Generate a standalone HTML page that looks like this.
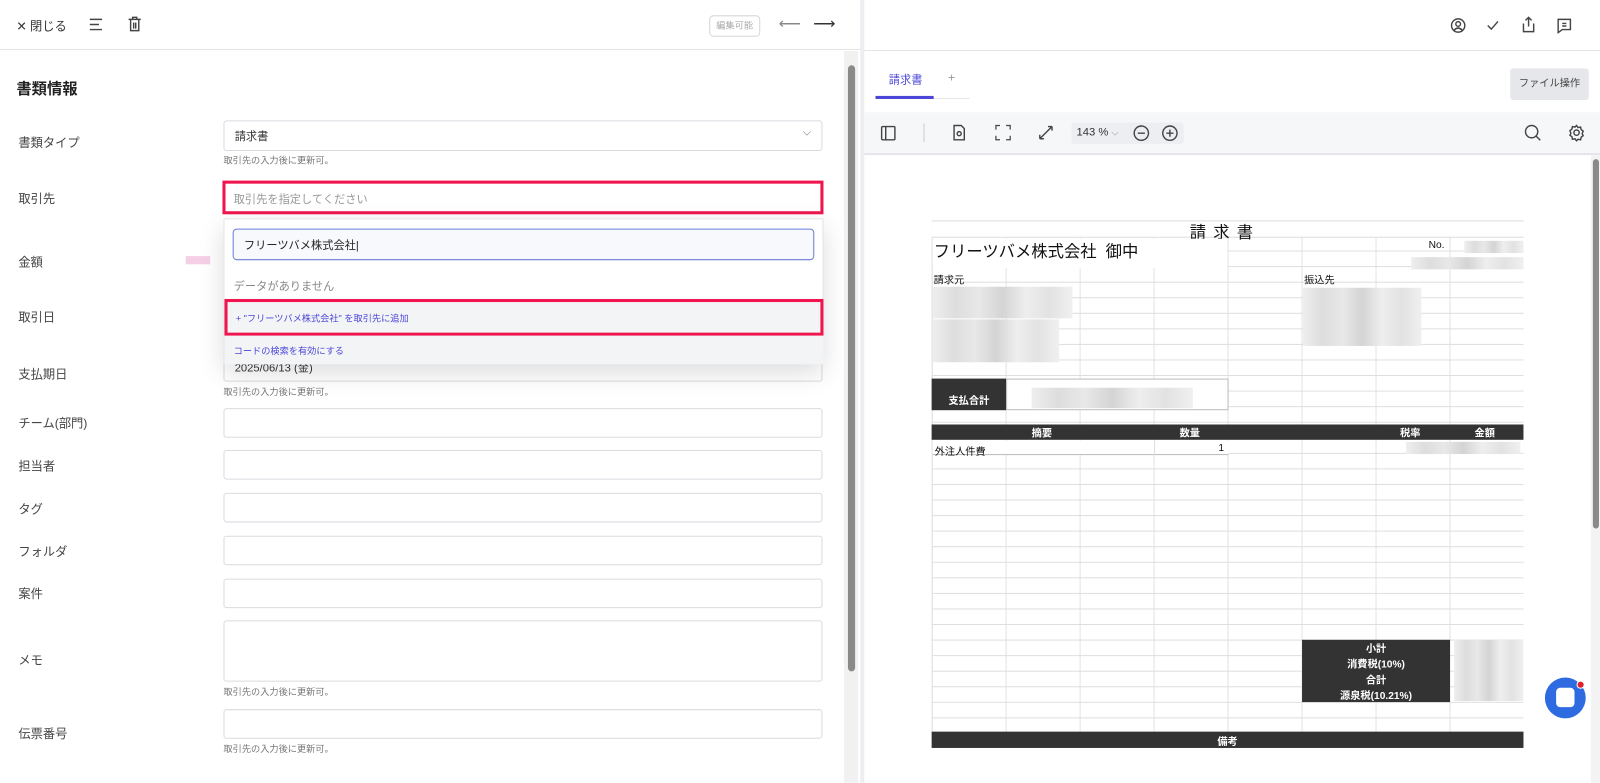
<!DOCTYPE html>
<html><head><meta charset="utf-8">
<style>
*{box-sizing:border-box;margin:0;padding:0}
body{width:1600px;height:767px;overflow:hidden;background:#fff;font-family:"Liberation Sans","Noto Sans CJK JP",sans-serif;color:#333}
#w{position:absolute;left:0;top:0;width:1568px;height:752px;transform:scale(1.020408);transform-origin:0 0}
.a{position:absolute}
.lbl{position:absolute;left:18px;font-size:12px;color:#444}
.inp{position:absolute;left:219px;width:587px;height:30px;border:1px solid #d9dbe0;border-radius:3px;background:#fff}
.hint{position:absolute;left:219px;font-size:9px;color:#777}
.ic{position:absolute;stroke:#444;fill:none;stroke-width:1.4}
.blur{position:absolute;background:linear-gradient(90deg,#eee,#ddd,#e8e8e8,#d4d4d4,#eee,#e2e2e2,#f0f0f0)}
.dk{position:absolute;background:#333;color:#fff;font-size:10px;font-weight:bold;text-align:center}
</style></head><body><div id="w">
<div class="a" style="left:0;top:0;width:843px;height:49px;border-bottom:1px solid #e5e5e5"></div>
<div class="a" style="left:16px;top:17px;font-size:12px;color:#333">✕ 閉じる</div>
<svg class="ic" style="left:86px;top:16px" width="16" height="16"><path d="M2 3h12M2 8h9M2 13h12"/></svg>
<svg class="ic" style="left:124px;top:15px" width="16" height="17"><path d="M2 4h12M6 4V2h4v2M4 4v11h8V4M7 7v6M9 7v6"/></svg>
<div class="a" style="left:695px;top:15px;width:50px;height:21px;border:1px solid #d4d6da;border-radius:4px;font-size:9px;color:#aaa;text-align:center;line-height:19px">編集可能</div>
<div class="a" style="left:763px;top:14px;font-size:15px;color:#888">⟵</div>
<div class="a" style="left:797px;top:14px;font-size:15px;color:#333">⟶</div>

<div class="a" style="left:16px;top:76px;font-size:15px;font-weight:bold;color:#222">書類情報</div>

<div class="lbl" style="top:131px">書類タイプ</div>
<div class="inp" style="top:118px"><span class="a" style="left:10px;top:6px;font-size:11px">請求書</span><span class="a" style="right:10px;top:5px;font-size:11px;color:#666">⌵</span></div>
<div class="hint" style="top:150px">取引先の入力後に更新可。</div>

<div class="lbl" style="top:186px">取引先</div>
<div class="a" style="left:218px;top:177px;width:589px;height:33px;border:3px solid #f0154f"><span class="a" style="left:8px;top:7px;font-size:11px;color:#999">取引先を指定してください</span></div>

<div class="lbl" style="top:248px">金額</div>
<div class="a" style="left:182px;top:251px;width:24px;height:8px;background:#f5cfe5"></div>
<div class="lbl" style="top:302px">取引日</div>
<div class="lbl" style="top:358px">支払期日</div>
<div class="inp" style="top:345px;height:29px"><span class="a" style="left:10px;top:6px;font-size:11px">2025/06/13 (金)</span></div>
<div class="hint" style="top:377px">取引先の入力後に更新可。</div>

<div class="a" style="left:219px;top:214px;width:588px;height:143px;background:#fff;border:1px solid #e2e4e8;box-shadow:0 8px 24px rgba(0,0,0,.14)">
 <div class="a" style="left:8px;top:9px;width:570px;height:31px;border:1px solid #6b7bd6;border-radius:4px;background:#f8f9fc"><span class="a" style="left:10px;top:7px;font-size:11px;color:#222">フリーツバメ株式会社|</span></div>
 <div class="a" style="left:9px;top:57px;font-size:11px;color:#888">データがありません</div>
 <div class="a" style="left:0;top:78px;width:587px;height:36px;border:3px solid #f0154f;background:#f3f4f6"><span class="a" style="left:8px;top:9px;font-size:9px;color:#4b47d6">+ "フリーツバメ株式会社" を取引先に追加</span></div>
 <div class="a" style="left:0;top:114px;width:587px;height:28px;background:#f3f4f6"><span class="a" style="left:9px;top:8px;font-size:9px;color:#4b47d6">コードの検索を有効にする</span></div>
</div>

<div class="lbl" style="top:406px">チーム(部門)</div><div class="inp" style="top:400px;height:29px"></div>
<div class="lbl" style="top:448px">担当者</div><div class="inp" style="top:441px;height:29px"></div>
<div class="lbl" style="top:490px">タグ</div><div class="inp" style="top:483px;height:29px"></div>
<div class="lbl" style="top:532px">フォルダ</div><div class="inp" style="top:525px;height:29px"></div>
<div class="lbl" style="top:573px">案件</div><div class="inp" style="top:567px;height:29px"></div>
<div class="lbl" style="top:638px">メモ</div><div class="inp" style="top:608px;height:60px"></div>
<div class="hint" style="top:671px">取引先の入力後に更新可。</div>
<div class="lbl" style="top:710px">伝票番号</div><div class="inp" style="top:695px;height:29px"></div>
<div class="hint" style="top:727px">取引先の入力後に更新可。</div>

<div class="a" style="left:827px;top:50px;width:14px;height:717px;background:#f1f1f1"></div>
<div class="a" style="left:831px;top:64px;width:7px;height:594px;background:#8a8a8a;border-radius:4px"></div>
<div class="a" style="left:843px;top:0;width:4px;height:767px;background:#eceef1"></div>

<div class="a" style="left:847px;top:49px;width:753px;height:1px;background:#e5e5e5"></div>
<svg class="ic" style="left:1421px;top:17px" width="16" height="16"><circle cx="8" cy="8" r="6.5"/><circle cx="8" cy="6.5" r="2.3"/><path d="M4 12.5q4-4 8 0"/></svg>
<svg class="ic" style="left:1456px;top:18px" width="14" height="14"><path d="M2 7l3.5 3.5L12 3"/></svg>
<svg class="ic" style="left:1490px;top:15px" width="16" height="18"><path d="M8 11V2M5 5l3-3 3 3M3 8v8h10V8"/></svg>
<svg class="ic" style="left:1525px;top:17px" width="16" height="16"><path d="M2 2h12v10H6l-4 3zM6 6h4M6 8.5h4"/></svg>

<div class="a" style="left:871px;top:70px;font-size:11px;color:#4b47d6">請求書</div>
<div class="a" style="left:929px;top:69px;font-size:12px;color:#999">+</div>
<div class="a" style="left:858px;top:96px;width:92px;height:1px;background:#e5e5e5"></div>
<div class="a" style="left:858px;top:94px;width:57px;height:3px;background:#4b47d6"></div>
<div class="a" style="left:1480px;top:67px;width:77px;height:31px;background:#e6e7ea;border-radius:3px;font-size:10px;color:#444;text-align:center;line-height:31px">ファイル操作</div>

<div class="a" style="left:847px;top:110px;width:753px;height:42px;background:#f6f7f9;border-bottom:2px solid #e4e6ea"></div>
<svg class="ic" style="left:862px;top:122px" width="17" height="17"><rect x="2" y="2" width="13" height="13" rx="1"/><path d="M6 2v13"/></svg>
<div class="a" style="left:905px;top:121px;width:1px;height:18px;background:#ccc"></div>
<svg class="ic" style="left:932px;top:121px" width="16" height="18"><path d="M3 2h7l3 3v11H3z"/><circle cx="8" cy="10" r="2"/></svg>
<svg class="ic" style="left:974px;top:121px" width="18" height="18"><path d="M2 6V2h4M16 6V2h-4M2 12v4h4M16 12v4h-4" stroke-width="1.2"/></svg>
<svg class="ic" style="left:1016px;top:121px" width="18" height="18"><path d="M3 15l12-12M3 15v-4M3 15h4M15 3h-4M15 3v4"/></svg>
<div class="a" style="left:1050px;top:120px;width:110px;height:21px;background:#eceef1;border-radius:3px"></div>
<div class="a" style="left:1055px;top:124px;font-size:11px;color:#333">143 % <span style="color:#888;font-size:9px">⌵</span></div>
<svg class="ic" style="left:1110px;top:122px" width="17" height="17"><circle cx="8.5" cy="8.5" r="7"/><path d="M5 8.5h7"/></svg>
<svg class="ic" style="left:1138px;top:122px" width="17" height="17"><circle cx="8.5" cy="8.5" r="7"/><path d="M5 8.5h7M8.5 5v7"/></svg>
<svg class="ic" style="left:1493px;top:121px" width="18" height="18"><circle cx="8" cy="8" r="6"/><path d="M12.5 12.5l4 4"/></svg>
<svg class="ic" style="left:1536px;top:121px" width="18" height="18"><circle cx="9" cy="9" r="2.6"/><path d="M9 2l1.5 2 2.5-.5.5 2.5 2 1.5-1 2.5 1 2-2 1.5-.5 2.5-2.5-.5L9 17l-1.5-2-2.5.5-.5-2.5-2-1.5 1-2-1-2.5 2-1.5.5-2.5 2.5.5z"/></svg>

<div class="a" style="left:1559px;top:152px;width:9px;height:615px;background:#f3f3f3"></div>
<div class="a" style="left:1561px;top:156px;width:6px;height:362px;background:#8a8a8a;border-radius:3px"></div>

<div class="a" style="left:913px;top:216px;width:580px;height:501px;border-left:1px solid #ddd;
background-image:linear-gradient(#fff0 14.5px,#ddd 14.5px),linear-gradient(90deg,#fff0 71.5px,#e2e2e2 71.5px);background-size:100% 15.25px,72.5px 100%"></div>
<div class="a" style="left:913px;top:216px;width:580px;height:17px;background:#fff;border-bottom:1px solid #ddd;border-top:1px solid #ddd"></div>
<div class="a" style="left:1166px;top:214px;font-size:16px;color:#111;letter-spacing:7px">請求書</div>
<div class="a" style="left:914px;top:234px;width:289px;height:29px;background:#fff"></div>
<div class="a" style="left:915px;top:233px;font-size:16px;color:#111">フリーツバメ株式会社&nbsp; 御中</div>
<div class="a" style="left:1400px;top:235px;font-size:10px;color:#111">No.</div>
<div class="blur" style="left:1435px;top:236px;width:58px;height:12px"></div>
<div class="blur" style="left:1383px;top:252px;width:110px;height:12px"></div>
<div class="a" style="left:915px;top:266px;font-size:10px;color:#111">請求元</div>
<div class="a" style="left:1278px;top:266px;font-size:10px;color:#111">振込先</div>
<div class="blur" style="left:914px;top:281px;width:137px;height:31px"></div>
<div class="blur" style="left:914px;top:313px;width:124px;height:42px"></div>
<div class="blur" style="left:1277px;top:282px;width:116px;height:57px"></div>
<div class="dk" style="left:913px;top:371px;width:73px;height:31px;line-height:46px">支払合計</div>
<div class="a" style="left:986px;top:371px;width:218px;height:31px;background:#fff;border:1px solid #bbb"></div>
<div class="blur" style="left:1011px;top:380px;width:158px;height:20px"></div>
<div class="dk" style="left:913px;top:416px;width:580px;height:15px;line-height:20px"><span class="a" style="left:98px">摘要</span><span class="a" style="left:243px">数量</span><span class="a" style="left:459px">税率</span><span class="a" style="left:532px">金額</span></div>
<div class="a" style="left:914px;top:432px;width:290px;height:14px;background:#fff;border-bottom:1px solid #bbb"></div>
<div class="a" style="left:1131px;top:432px;width:1px;height:14px;background:#ddd"></div>
<div class="a" style="left:916px;top:434px;font-size:10px;color:#111">外注人件費</div>
<div class="a" style="left:1194px;top:434px;font-size:10px;color:#111">1</div>
<div class="blur" style="left:1378px;top:433px;width:112px;height:12px"></div>
<div class="dk" style="left:1276px;top:627px;width:145px;height:61px;line-height:15.3px;padding-top:2px">小計<br>消費税(10%)<br>合計<br>源泉税(10.21%)</div>
<div class="blur" style="left:1425px;top:627px;width:68px;height:60px"></div>
<div class="dk" style="left:913px;top:717px;width:580px;height:16px;line-height:22px">備考</div>

<div class="a" style="left:1514px;top:664px;width:40px;height:40px;border-radius:50%;background:#2f6be0"></div>
<div class="a" style="left:1525px;top:674px;width:18px;height:19px;border-radius:4px;border:2px solid #fff;background:#fff"></div>
<div class="a" style="left:1545px;top:667px;width:8px;height:8px;border-radius:50%;background:#e0202a;border:1px solid #fff"></div>
</div></body></html>
